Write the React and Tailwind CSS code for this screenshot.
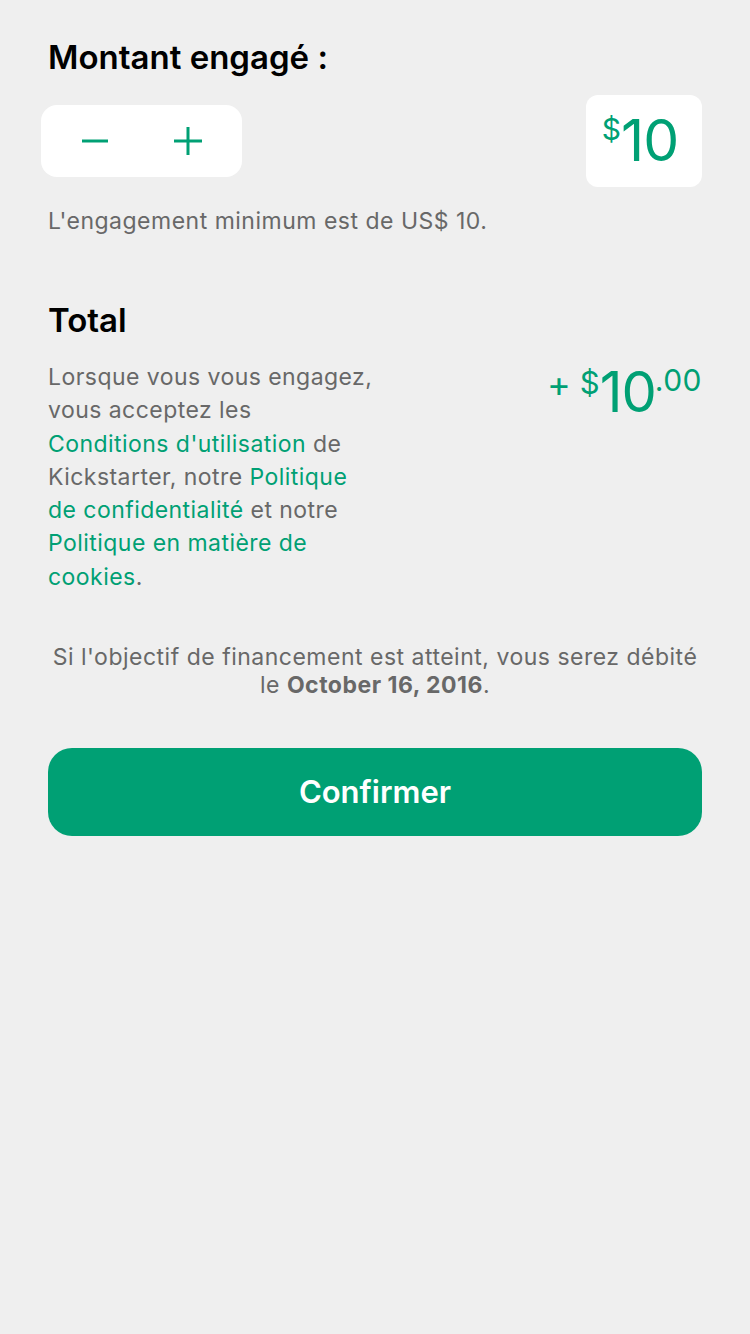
import React from 'react';

function App() {
  const font = { fontFamily: 'Inter, "Noto Sans", sans-serif' };
  return (
    <div style={font} className="min-h-[1334px] w-[750px] bg-[#efefef] px-12 pt-[36px]">
      <h1 className="text-[33px] leading-[42px] font-semibold text-black">Montant engagé :</h1>

      <div className="mt-[17px] flex items-start justify-between">
        <div className="-ml-[7px] mt-[10px] flex h-[72px] w-[201px] items-center rounded-2xl bg-white">
          <svg className="ml-[41px]" width="26" height="26" viewBox="0 0 26 26">
            <path d="M0 13H26" stroke="#00a074" strokeWidth="3" />
          </svg>
          <svg className="ml-[66px]" width="28" height="28" viewBox="0 0 28 28">
            <path d="M0 14H28M14 0V28" stroke="#00a074" strokeWidth="3" />
          </svg>
        </div>
        <div className="flex h-[92px] w-[116px] items-start justify-center rounded-xl bg-white pt-[16px] pr-[8px] text-[#00a074]">
          <span className="mt-[3px] text-[30px] leading-[30px]">$</span>
          <span className="text-[57px] leading-[60px] tracking-[-1px]">10</span>
        </div>
      </div>

      <p className="mt-[19px] text-[23px] leading-[30px] tracking-[0.5px] text-[#686868]">L'engagement minimum est de US$ 10.</p>

      <h2 className="mt-[63px] text-[33px] leading-[42px] font-semibold text-black">Total</h2>

      <div className="mt-[20px] flex items-start justify-between">
        <div className="text-[23px] leading-[33.3px] tracking-[0.45px] text-[#686868]">
          <div>Lorsque vous vous engagez,</div>
          <div>vous acceptez les</div>
          <div><span className="text-[#00a074]">Conditions d'utilisation</span> de</div>
          <div>Kickstarter, notre <span className="text-[#00a074]">Politique</span></div>
          <div><span className="text-[#00a074]">de confidentialité</span> et notre</div>
          <div><span className="text-[#00a074]">Politique en matière de</span></div>
          <div><span className="text-[#00a074]">cookies</span>.</div>
        </div>
        <div className="mt-[1px] flex items-start text-[#00a074]">
          <span className="mt-[4px] text-[36px] leading-[36px]">+</span>
          <span className="ml-[9px] mt-[6px] text-[31px] leading-[30px]">$</span>
          <span className="text-[56px] leading-[60px] tracking-[-1px]">10</span>
          <span className="ml-[-1px] mt-[3px] text-[30px] leading-[30px] tracking-[0.5px]">.00</span>
        </div>
      </div>

      <p className="mt-[49px] text-center text-[23px] leading-[28px] tracking-[0.5px] text-[#686868]">
        Si l'objectif de financement est atteint, vous serez débité
        <br />
        le <span className="font-bold">October 16, 2016</span>.
      </p>

      <button className="mt-[49px] flex h-[88px] w-full items-center justify-center rounded-3xl bg-[#00a074] text-[31px] font-semibold text-white">
        Confirmer
      </button>
    </div>
  );
}

export default App;
